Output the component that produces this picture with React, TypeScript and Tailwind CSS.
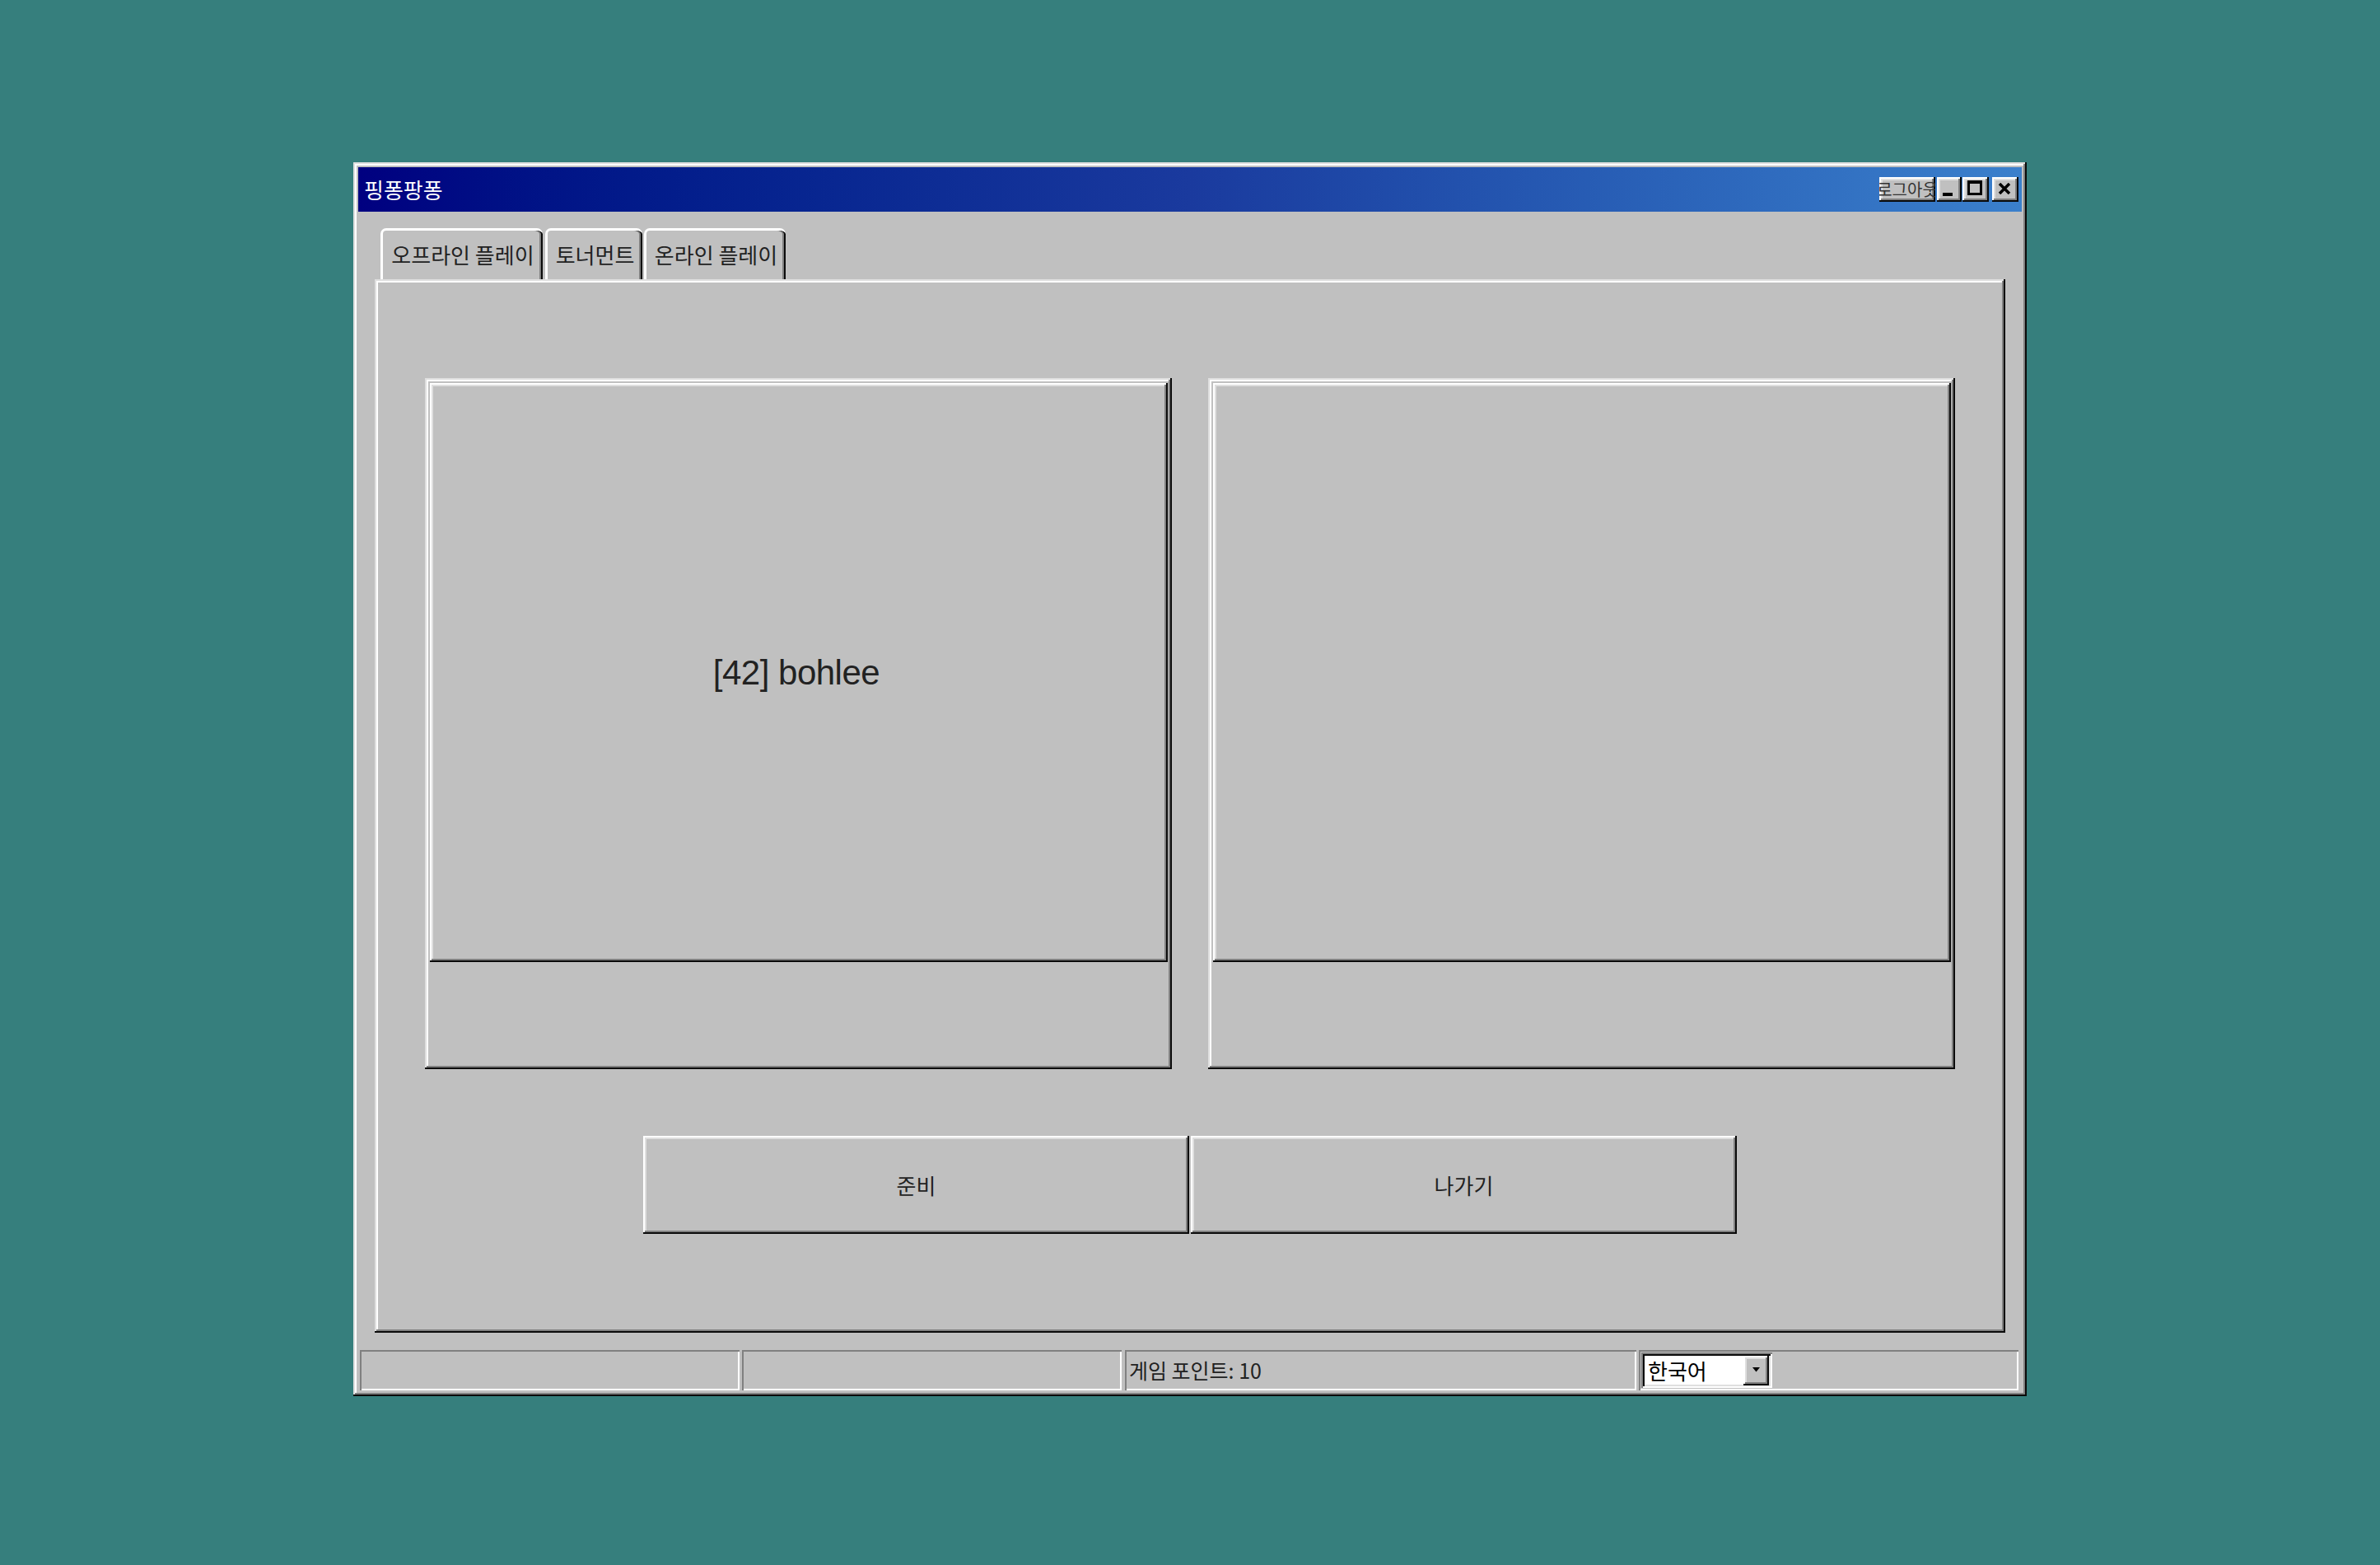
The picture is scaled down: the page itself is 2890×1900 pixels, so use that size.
const raisedOuter =
  "shadow-[inset_-2px_-2px_0_#0a0a0a,inset_2px_2px_0_#dfdfdf,inset_-4px_-4px_0_#808080,inset_4px_4px_0_#ffffff]";
const raised =
  "shadow-[inset_-2px_-2px_0_#0a0a0a,inset_2px_2px_0_#ffffff,inset_-4px_-4px_0_#808080,inset_4px_4px_0_#dfdfdf]";
const sunken = "shadow-[inset_2px_2px_0_#808080,inset_-2px_-2px_0_#ffffff]";

function TitleButton({
  className,
  children,
}: {
  className: string;
  children?: React.ReactNode;
}) {
  return (
    <div className={`relative h-[30px] bg-[#c0c0c0] overflow-hidden ${raised} ${className}`}>
      {children}
    </div>
  );
}

function PlayerCard({ name }: { name?: string }) {
  return (
    <div className={`w-[907px] h-[839px] bg-[#c0c0c0] pt-[6px] pl-[6px] ${raisedOuter}`}>
      <div
        className={`w-[896px] h-[703px] flex items-center justify-center bg-[#c0c0c0] ${raised}`}
      >
        {name && (
          <span className="text-[42px] text-[#222] font-['Liberation_Sans',sans-serif] tracking-[-0.5px] -ml-[6px]">
            {name}
          </span>
        )}
      </div>
    </div>
  );
}

function Tab({ label, width }: { label: string; width: string }) {
  return (
    <div
      className={`${width} h-[62px] flex items-center justify-center pb-[3px] border-t-[3px] border-l-[3px] border-white rounded-t-[7px] bg-[#c0c0c0] shadow-[inset_-2px_0_0_#0a0a0a,inset_-4px_0_0_#808080] text-[26px] text-[#222] whitespace-nowrap`}
    >
      {label}
    </div>
  );
}

export default function App() {
  return (
    <div className="w-[2890px] h-[1900px] bg-[#367f7d] pt-[197px] pl-[429px] font-['Noto_Sans_CJK_KR','Noto_Sans',sans-serif]">
      {/* Window */}
      <div className={`w-[2032px] h-[1498px] bg-[#c0c0c0] p-[6px] flex flex-col ${raisedOuter}`}>
        {/* Title bar */}
        <div className="h-[54px] shrink-0 flex items-center justify-between pl-[7px] pr-[4px] bg-linear-to-r from-[#000080] via-[#1a3a9e] to-[#3b80cc]">
          <span className="text-[26px] text-white leading-none">핑퐁팡퐁</span>
          <div className="flex items-center">
            <TitleButton className="w-[68px] flex items-center justify-center">
              <span className="whitespace-nowrap text-[20px] text-[#333] leading-none">로그아웃</span>
            </TitleButton>
            <TitleButton className="w-[30px] ml-[2px]">
              <div className="absolute left-[7px] top-[19px] w-[12px] h-[4px] bg-black" />
            </TitleButton>
            <TitleButton className="w-[32px] ml-[1px]">
              <div className="absolute left-[6px] top-[4px] w-[18px] h-[18px] border-[3px] border-t-[4px] border-black" />
            </TitleButton>
            <TitleButton className="w-[32px] ml-[4px]">
              <svg className="absolute left-[7px] top-[7px]" width="16" height="14" viewBox="0 0 16 14">
                <path d="M2 1 L14 13 M14 1 L2 13" stroke="#000" strokeWidth="3.5" />
              </svg>
            </TitleButton>
          </div>
        </div>

        {/* Body */}
        <div className="flex-1 flex flex-col px-[20px] pt-[20px]">
          <div className="flex items-end pl-[7px] h-[62px] shrink-0">
            <Tab label="오프라인 플레이" width="w-[197px]" />
            <div className="w-[3px]" />
            <Tab label="토너먼트" width="w-[118px]" />
            <div className="w-[2px]" />
            <Tab label="온라인 플레이" width="w-[172px]" />
          </div>

          {/* Tab panel */}
          <div className={`h-[1279px] shrink-0 bg-[#c0c0c0] pt-[120px] pl-[61px] ${raisedOuter}`}>
            <div className="flex gap-[44px]">
              <PlayerCard name="[42] bohlee" />
              <PlayerCard />
            </div>
            <div className="flex justify-center gap-[2px] mt-[81px] pr-[61px]">
              <button
                className={`w-[663px] h-[119px] flex items-center justify-center text-[26px] text-[#222] bg-[#c0c0c0] ${raised}`}
              >
                준비
              </button>
              <button
                className={`w-[663px] h-[119px] flex items-center justify-center text-[26px] text-[#222] bg-[#c0c0c0] ${raised}`}
              >
                나가기
              </button>
            </div>
          </div>

          {/* Status bar */}
          <div className="flex mt-[21px] h-[49px] -mx-[18px] mr-[-16px]">
            <div className={`w-[461px] h-full ${sunken}`} />
            <div className={`w-[461px] h-full ml-[3px] ${sunken}`} />
            <div className={`w-[621px] h-full ml-[4px] flex items-center pl-[5px] text-[25px] text-[#222] ${sunken}`}>
              게임 포인트: 10
            </div>
            <div className={`w-[461px] h-full ml-[3px] flex items-center pl-[3px] ${sunken}`}>
              <div
                className={`w-[159px] h-[43px] bg-white flex items-center pl-[8px] pr-[4px] justify-between shadow-[inset_2px_2px_0_#808080,inset_-2px_-2px_0_#ffffff,inset_4px_4px_0_#0a0a0a,inset_-4px_-4px_0_#dfdfdf]`}
              >
                <span className="text-[26px] text-black leading-none">한국어</span>
                <div className={`relative w-[31px] h-[36px] bg-[#c0c0c0] ${raised}`}>
                  <svg className="absolute left-[11px] top-[14px]" width="9" height="6" viewBox="0 0 9 6">
                    <path d="M0 0 H9 L4.5 5.5 Z" fill="#000" />
                  </svg>
                </div>
              </div>
            </div>
          </div>
        </div>
      </div>
    </div>
  );
}
